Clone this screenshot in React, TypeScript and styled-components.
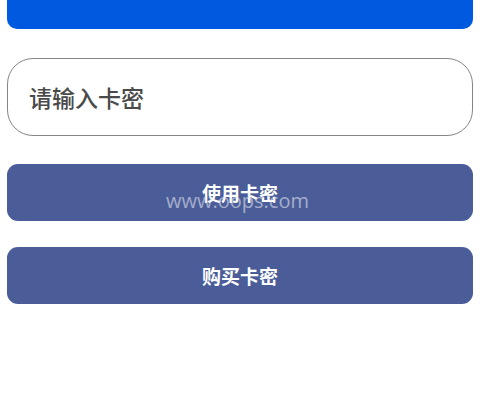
import React from "react";
import styled, { createGlobalStyle } from "styled-components";

const Global = createGlobalStyle`
  html, body { margin: 0; padding: 0; background: #ffffff; }
  body { font-family: "Noto Sans CJK SC", "Noto Sans", sans-serif; }
`;

const Page = styled.div`
  display: flex;
  flex-direction: column;
  padding: 0 7px;
  width: 480px;
  box-sizing: border-box;
`;

const TopBar = styled.div`
  height: 29px;
  background: #0059de;
  border-radius: 0 0 10px 10px;
  margin-bottom: 29px;
`;

const Input = styled.input`
  height: 78px;
  box-sizing: border-box;
  border: 1.5px solid #858585;
  border-radius: 26px;
  padding: 0 21px;
  font-family: "Noto Sans CJK SC", sans-serif;
  font-size: 23px;
  font-weight: 500;
  color: #444;
  outline: none;
  margin-bottom: 28px;
  &::placeholder { color: #4a4a4a; }
`;

const Button = styled.button<{ $gap?: number }>`
  position: relative;
  height: 57px;
  border: none;
  border-radius: 11px;
  background: #4a5d98;
  color: #ffffff;
  font-family: "Noto Sans CJK SC", sans-serif;
  font-size: 19px;
  font-weight: 700;
  display: flex;
  align-items: center;
  justify-content: center;
  margin-bottom: ${(p) => p.$gap ?? 0}px;
  padding: 0;
`;

const Watermark = styled.span`
  position: absolute;
  left: 159px;
  top: 23px;
  font-family: "Open Sans", "Liberation Sans", sans-serif;
  font-size: 20px;
  font-weight: 400;
  color: rgba(225, 228, 240, 0.6);
  pointer-events: none;
`;

export default function App() {
  return (
    <>
      <Global />
      <Page>
        <TopBar />
        <Input placeholder="请输入卡密" />
        <Button $gap={26}>
          使用卡密
          <Watermark>www.oops.com</Watermark>
        </Button>
        <Button>购买卡密</Button>
      </Page>
    </>
  );
}
